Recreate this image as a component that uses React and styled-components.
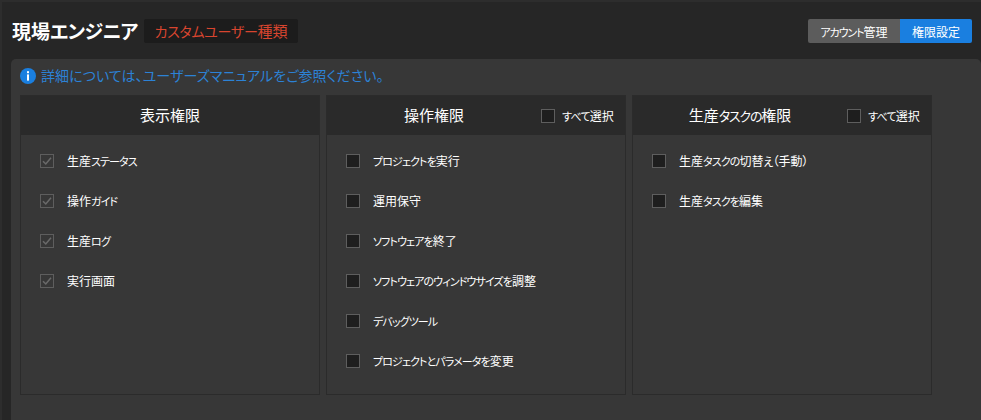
import React from 'react';
import styled, { createGlobalStyle } from 'styled-components';

const Global = createGlobalStyle`
  html, body { margin: 0; padding: 0; background: #262626; }
  body {
    font-family: "Noto Sans CJK JP", "Liberation Sans", sans-serif;
    font-feature-settings: "palt" 1;
  }
`;

const Page = styled.div`
  width: 981px;
  height: 420px;
  box-sizing: border-box;
  overflow: hidden;
  background: #262626;
  border-left: 2px solid #2d2d2d;
  border-top: 2px solid #2d2d2d;
  padding: 17px 0 0 9px;
  display: flex;
  flex-direction: column;
`;

const TopBar = styled.div`
  height: 24px;
  display: flex;
  align-items: center;
  padding-right: 9px;
  margin-left: 1px;
`;

const Title = styled.h1`
  margin: 0;
  font-size: 19px;
  line-height: 24px;
  font-weight: 700;
  color: #fff;
  white-space: nowrap;
`;

const Tag = styled.span`
  margin-left: 6px;
  height: 24px;
  width: 154px;
  box-sizing: border-box;
  padding-left: 11px;
  background: #1c1c1c;
  border-radius: 2px;
  color: #d8452f;
  font-size: 15px;
  line-height: 24px;
  white-space: nowrap;
`;

const Tabs = styled.div`
  margin-left: auto;
  display: flex;
  border-radius: 2px;
  overflow: hidden;
`;

const Tab = styled.div`
  height: 24px;
  width: ${p => p.$w}px;
  display: flex;
  align-items: center;
  justify-content: center;
  font-size: 12px;
  white-space: nowrap;
  color: #fff;
  background: ${p => (p.$active ? '#1a7fe0' : '#5c5c5c')};
`;

const Panel = styled.section`
  margin-top: 16px;
  flex: 1;
  background: #373737;
  border-radius: 5px 5px 0 0;
  padding: 6px 0 0 9px;
  display: flex;
  flex-direction: column;
`;

const Notice = styled.div`
  height: 22px;
  display: flex;
  align-items: center;
  gap: 5px;
  color: #2c82d6;
  font-size: 14px;
`;

const NoticeText = styled.span`
  margin-bottom: 2px;
  letter-spacing: 0.08px;
`;

const Columns = styled.div`
  margin-top: 8px;
  display: flex;
  gap: 6px;
`;

const Card = styled.div`
  width: 300px;
  height: 300px;
  box-sizing: border-box;
  border: 1px solid #2b2b2b;
  display: flex;
  flex-direction: column;
`;

const CardHead = styled.div`
  height: 39px;
  flex: none;
  background: #2a2a2a;
  display: flex;
  align-items: center;
  color: #fff;
`;

const HeadTitle = styled.span`
  flex: 1;
  text-align: center;
  font-size: 15px;
  padding-bottom: 2px;
`;

const SelectAll = styled.label`
  width: 74px;
  margin-right: 10px;
  display: flex;
  align-items: center;
  gap: 7px;
  font-size: 12px;
  line-height: 14px;
  color: #fff;
  white-space: nowrap;
`;

const Rows = styled.div`
  padding: 6px 0 0 19px;
  display: flex;
  flex-direction: column;
`;

const Row = styled.div`
  height: 40px;
  display: flex;
  align-items: center;
  gap: 13px;
  font-size: 12px;
  color: #fff;
  white-space: nowrap;
`;

const RowLabel = styled.span`
  margin-bottom: 2px;
`;

const Kana = styled.span`
  font-size: ${p => p.$size}px;
  letter-spacing: ${p => p.$track}px;
`;

const Box = styled.span`
  width: 12px;
  height: 12px;
  flex: none;
  display: inline-flex;
  align-items: center;
  justify-content: center;
  border: 1px solid #5e5e5e;
  background: ${p => (p.$checked ? 'transparent' : '#1e1e1e')};
`;

const Check = ({ checked }) => (
  <Box $checked={checked}>
    {checked && (
      <svg width="12" height="12" viewBox="0 0 12 12" fill="none">
        <path d="M2 6.2 L4.8 9 L10 2.8" stroke="#6a6a6a" strokeWidth="1.5" />
      </svg>
    )}
  </Box>
);

const InfoIcon = () => (
  <svg width="16" height="16" viewBox="0 0 16 16">
    <circle cx="8" cy="8" r="8" fill="#1a7fe0" />
    <rect x="7" y="3.2" width="2" height="2" fill="#fff" />
    <rect x="7" y="6.4" width="2" height="6.2" fill="#fff" />
  </svg>
);

// The reference's font sets kana narrower than kanji, so kana runs get their own size and tracking.
const Narrow = ({ text, size = 11, track = -0.9 }) => (
  <span>
    {text.split(/([\u3040-\u30ff]+)/).map((part, i) =>
      i % 2 ? (
        <Kana key={i} $size={size} $track={track}>
          {part}
        </Kana>
      ) : (
        part
      )
    )}
  </span>
);

const cols = [
  { title: '表示権限', checked: true, items: ['生産ステータス', '操作ガイド', '生産ログ', '実行画面'] },
  {
    title: '操作権限',
    all: true,
    items: ['プロジェクトを実行', '運用保守', 'ソフトウェアを終了', 'ソフトウェアのウィンドウサイズを調整', 'デバッグツール', 'プロジェクトとパラメータを変更'],
  },
  { title: '生産タスクの権限', all: true, items: ['生産タスクの切替え（手動）', '生産タスクを編集'] },
];

export default function App() {
  return (
    <Page>
      <Global />
      <TopBar>
        <Title>
          <Narrow text="現場エンジニア" size={19} track={-0.6} />
        </Title>
        <Tag>
          <Narrow text="カスタムユーザー種類" size={14} track={-0.3} />
        </Tag>
        <Tabs>
          <Tab $w={92}>
            <Narrow text="アカウント管理" track={-1.1} />
          </Tab>
          <Tab $w={72} $active>権限設定</Tab>
        </Tabs>
      </TopBar>
      <Panel>
        <Notice>
          <InfoIcon />
          <NoticeText>詳細については、ユーザーズマニュアルをご参照ください。</NoticeText>
        </Notice>
        <Columns>
          {cols.map(c => (
            <Card key={c.title}>
              <CardHead>
                <HeadTitle>
                  <Narrow text={c.title} size={13} track={-1.2} />
                </HeadTitle>
                {c.all && (
                  <SelectAll>
                    <Check />
                    <Narrow text="すべて選択" track={-0.8} />
                  </SelectAll>
                )}
              </CardHead>
              <Rows>
                {c.items.map(i => (
                  <Row key={i}>
                    <Check checked={c.checked} />
                    <RowLabel>
                      <Narrow text={i} />
                    </RowLabel>
                  </Row>
                ))}
              </Rows>
            </Card>
          ))}
        </Columns>
      </Panel>
    </Page>
  );
}
